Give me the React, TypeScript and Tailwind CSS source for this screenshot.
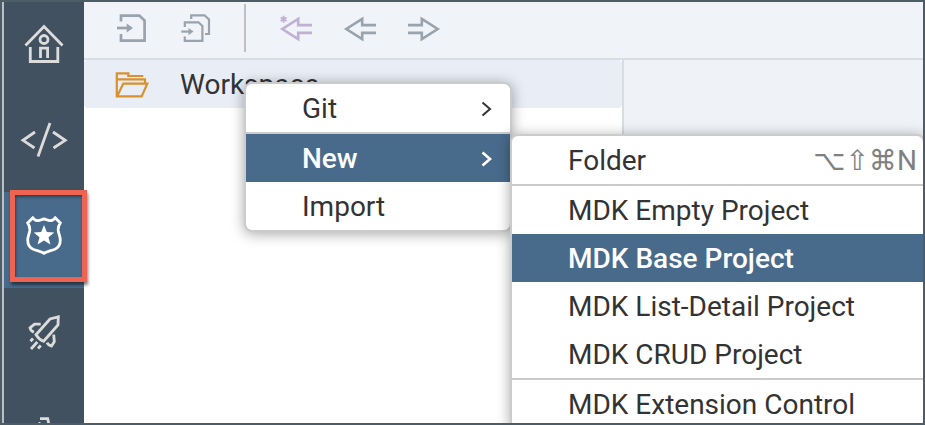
import type { ReactNode } from "react";

type SideItem = { label: string; active?: boolean; icon: ReactNode };

const sideItems: SideItem[] = [
  {
    label: "Home",
    icon: (
      <>
        <path d="M5.5 21.5 24 2.5 42.5 21.5" />
        <path d="M10.3 23V37.5H37.8V23" />
        <circle cx="24" cy="15.5" r="4" />
        <path d="M20.5 34V24.2H27.6V34" />
      </>
    ),
  },
  {
    label: "Development",
    icon: (
      <>
        <path d="M15 12 3 20.3 14.5 28" />
        <path d="M30 3 18 36.5" />
        <path d="M33 12 45.2 20.3 33.5 28" />
      </>
    ),
  },
  {
    label: "Mobile Services",
    active: true,
    icon: (
      <>
        <path d="M12.8 1.8C14.5 4 16 4.6 18 4.6C20.5 4.6 22 3 24 3C26 3 27.5 4.6 30 4.6C32 4.6 33.5 4 35.2 1.8L40.3 7C38.5 9.5 37.8 11.5 38.3 15C38.9 18.5 40.3 20.5 40.3 24.3C40.3 29 38 32 34.3 33.5C30 35 27 35.5 24 37.3C21 35.5 18 35 13.7 33.5C10 32 7.7 29 7.7 24.3C7.7 20.5 9.1 18.5 9.7 15C10.2 11.5 9.5 9.5 7.7 7Z" />
        <path
          d="M24 9 26.8 16 34.3 16.5 28.5 21.3 30.4 28.6 24 24.6 17.6 28.6 19.5 21.3 13.7 16.5 21.2 16Z"
          fill="currentColor"
          stroke="none"
        />
      </>
    ),
  },
  {
    label: "Deployment",
    icon: (
      <>
        <path d="M38.3 4.8 30 7 16 22.7Q19 27.5 23.6 29.3L38 13Z" />
        <path d="M20.7 12.1H14.5L10 15.8Q10.5 18.8 13.9 20.3" />
        <path d="M33.7 22.7 34.3 29.7 31.5 34Q28.5 33.6 27 30.7" />
        <path d="M10.5 29.3 13 26.5M11 37 17.3 30M18 36.5 20.8 33.5" />
      </>
    ),
  },
  {
    label: "Extensions",
    icon: <path d="M20 10.7H27.7L29.7 20M18.5 15.3H20.5" />,
  },
];

type Tool = { label: string; tone: string; width: number; icon: ReactNode };

const fileTools: Tool[] = [
  {
    label: "Save",
    tone: "text-[#98a3ae]",
    width: 2.7,
    icon: (
      <>
        <path d="M5 9.5V3.6H23.3L28.6 8.6V28.6H5V22" />
        <path d="M1 16H13" />
        <path d="M10.7 11.5 17 16 10.7 20.5Z" fill="currentColor" stroke="none" />
      </>
    ),
  },
  {
    label: "Save all",
    tone: "text-[#98a3ae]",
    width: 2.2,
    icon: (
      <>
        <path d="M4.8 15V10.3H18.5L22.4 14V28.8H4.8V24.5" />
        <path d="M11.2 7V3.3H24.5L29 7.5V22H25" />
        <path d="M1.3 19.6H10" />
        <path d="M8.5 16 13.5 19.6 8.5 23.2Z" fill="currentColor" stroke="none" />
      </>
    ),
  },
];

const navTools: Tool[] = [
  {
    label: "Last edit",
    tone: "text-[#bfb0d4]",
    width: 2.6,
    icon: (
      <>
        <path d="M32 13.1H18.2V6.8L2.3 17 18.2 27.2V20.9H32" />
        <path d="M3.6 3.8V10.8M0.6 5.5 6.6 9M0.6 9 6.6 5.5" strokeWidth="1.8" />
      </>
    ),
  },
  {
    label: "Back",
    tone: "text-[#98a3ae]",
    width: 2.6,
    icon: <path d="M32 13.1H18.2V6.8L2.3 17 18.2 27.2V20.9H32" />,
  },
  {
    label: "Forward",
    tone: "text-[#98a3ae]",
    width: 2.6,
    icon: <path d="M0 13.1H13.8V6.8L29.7 17 13.8 27.2V20.9H0" />,
  },
];

function ToolButton({ tool }: { tool: Tool }) {
  return (
    <button type="button" aria-label={tool.label} className={tool.tone}>
      <svg
        viewBox="0 0 32 32"
        className="block size-8 overflow-visible"
        fill="none"
        stroke="currentColor"
        strokeWidth={tool.width}
      >
        {tool.icon}
      </svg>
    </button>
  );
}

type Entry = {
  label: string;
  selected?: boolean;
  submenu?: boolean;
  shortcut?: string;
  divided?: boolean;
};

const contextEntries: Entry[] = [
  { label: "Git", submenu: true },
  { label: "New", submenu: true, selected: true, divided: true },
  { label: "Import" },
];

const newEntries: Entry[] = [
  { label: "Folder", shortcut: "⌥⇧⌘N" },
  { label: "MDK Empty Project", divided: true },
  { label: "MDK Base Project", selected: true },
  { label: "MDK List-Detail Project" },
  { label: "MDK CRUD Project" },
  { label: "MDK Extension Control", divided: true },
];

function MenuList({ entries, label }: { entries: Entry[]; label: string }) {
  return (
    <ul
      role="menu"
      aria-label={label}
      className="overflow-hidden rounded-lg border-2 border-[#cbcbcb] bg-white shadow-[0_2px_14px_rgba(0,0,0,0.35)]"
    >
      {entries.map((e) => (
        <li key={e.label} role="none" className={e.divided ? "border-t-2 border-[#cbcbcb]" : ""}>
          <button
            type="button"
            role="menuitem"
            className={
              "flex h-12 w-full items-center justify-between pt-0.5 pl-14 text-left " +
              (e.selected ? "bg-[#486b8b] font-medium text-white " : "text-[#333333] ") +
              (e.shortcut ? "pr-1.5" : "pr-4.5")
            }
          >
            <span className="whitespace-nowrap">{e.label}</span>
            {e.submenu && (
              <svg
                viewBox="0 0 12 16"
                className="h-4 w-3"
                fill="none"
                stroke="currentColor"
                strokeWidth={e.selected ? 2.6 : 2}
              >
                <path d="M2.5 1.5 10 8 2.5 14.5" />
              </svg>
            )}
            {e.shortcut && <span className="text-[#808080]">{e.shortcut}</span>}
          </button>
        </li>
      ))}
    </ul>
  );
}

export default function App() {
  return (
    <div className="relative flex h-screen overflow-hidden border-2 border-[#4c5d68] bg-white font-['Roboto','DejaVu_Sans',sans-serif] text-[28px] text-[#333333]">
      <nav
        aria-label="Perspectives"
        className="flex w-[82px] shrink-0 flex-col overflow-hidden border-l-2 border-[#bcc0c4] bg-[#42515f]"
      >
        <div className="-mt-0.5 flex flex-col">
          {sideItems.map((s) => (
            <button
              key={s.label}
              type="button"
              aria-label={s.label}
              className={
                "flex h-24 items-center justify-center pb-2 " +
                (s.active ? "bg-[#486b8b] text-white" : "text-[#dcdcdc]")
              }
            >
              <svg
                viewBox="0 0 48 40"
                className="h-10 w-12"
                fill="none"
                stroke="currentColor"
                strokeWidth={2.8}
              >
                {s.icon}
              </svg>
            </button>
          ))}
        </div>
      </nav>

      <div className="flex min-w-0 flex-1 flex-col">
        <header className="flex items-center gap-8 border-b-2 border-[#d9dce0] bg-[#f0f3f8] pt-0.5 pb-1.5 pl-8">
          {fileTools.map((t) => (
            <ToolButton key={t.label} tool={t} />
          ))}
          <div className="mr-0.5 h-12 w-0.5 bg-[#bfbfbf]" />
          {navTools.map((t) => (
            <ToolButton key={t.label} tool={t} />
          ))}
        </header>

        <div className="flex flex-1">
          <section aria-label="Files" className="w-[540px] shrink-0 border-r-2 border-[#d9dce0]">
            <button
              type="button"
              className="flex h-12 w-full items-center gap-8 rounded-sm bg-[#e8edf6] pt-0.5 pl-8 text-left"
            >
              <svg
                viewBox="0 0 32 32"
                className="size-8 overflow-visible text-[#d9902f]"
                fill="none"
                stroke="currentColor"
                strokeWidth={2.2}
              >
                <path d="M27.3 7H12.3V4.4H0.8V27.4H25.7L31.3 14.6H7.3L1.2 27.2" />
                <path d="M0.8 10.4H29V14.2" />
              </svg>
              <span>Workspace</span>
            </button>
          </section>
          <main className="flex-1 bg-[#eff3f8]" />
        </div>
      </div>

      <div className="pointer-events-none absolute top-[188px] left-2 h-[92px] w-[77px] border-5 border-[#ee6352] shadow-[1px_3px_3px_rgba(0,0,0,0.5),inset_1px_2px_3px_rgba(0,0,0,0.4)]" />

      <div className="absolute top-20 left-[242px] w-[268px]">
        <MenuList entries={contextEntries} label="Workspace" />
      </div>
      <div className="absolute top-[132px] -right-0.5 left-[508px]">
        <MenuList entries={newEntries} label="New" />
      </div>
    </div>
  );
}
